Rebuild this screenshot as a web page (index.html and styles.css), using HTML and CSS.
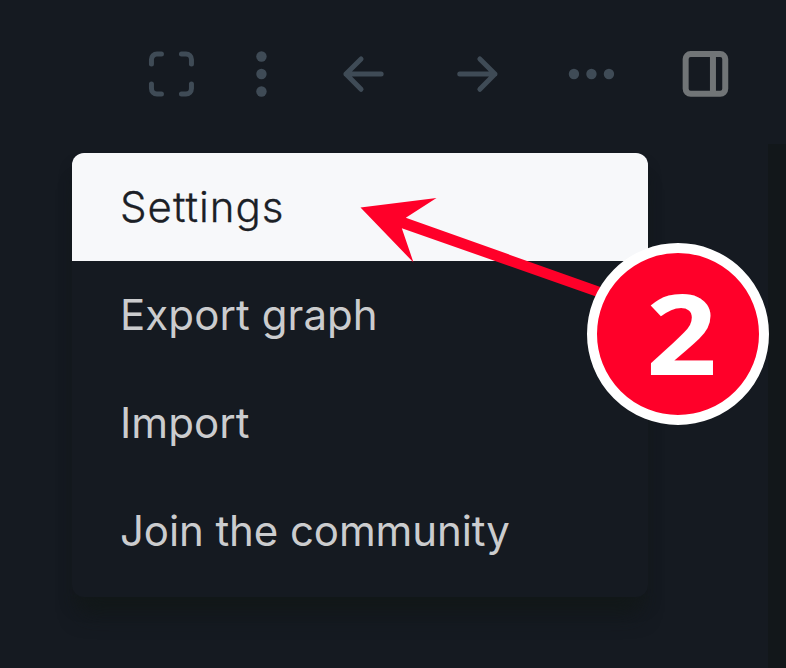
FILE: index.html
```html
<!DOCTYPE html>
<html lang="en">
<head>
<meta charset="utf-8">
<title>Menu</title>
<link rel="stylesheet" href="styles.css">
</head>
<body>
<div class="app">
  <header class="toolbar">
    <svg class="icon icon-full" viewBox="0 0 48 48"><path d="M14 4H9.500a5.500 5.500 0 0 0-5.500 5.500V14M34 4h4.500a5.500 5.500 0 0 1 5.500 5.500V14M4 34v4.500A5.500 5.500 0 0 0 9.500 44H14M44 34v4.500a5.500 5.500 0 0 1-5.500 5.500H34"/></svg>
    <svg class="icon icon-more" viewBox="0 0 48 48"><g class="dots"><circle cx="24" cy="6.500" r="5.200"/><circle cx="24" cy="24" r="5.200"/><circle cx="24" cy="41.500" r="5.200"/></g></svg>
    <svg class="icon" viewBox="0 0 48 48"><path d="M41.700 24H6.500M21.600 8.900L6.500 24l15.100 15.300"/></svg>
    <svg class="icon" viewBox="0 0 48 48"><path d="M6.300 24h35.200M26.400 8.900L41.500 24 26.400 39.300"/></svg>
    <svg class="icon" viewBox="0 0 48 48"><g class="dots"><circle cx="6.500" cy="24" r="5.200"/><circle cx="24" cy="24" r="5.200"/><circle cx="41.500" cy="24" r="5.200"/></g></svg>
    <svg class="icon icon-panel" viewBox="0 0 48 48"><rect x="4.200" y="4.100" width="39.600" height="39.700" rx="5"/><path d="M31.500 4v40"/></svg>
  </header>
  <div class="content">
    <main class="page">
      <nav class="menu">
        <a class="item active">Settings</a>
        <a class="item">Export graph</a>
        <a class="item">Import</a>
        <a class="item community">Join the community</a>
      </nav>
    </main>
    <aside class="sidebar"></aside>
  </div>
  <svg class="pointer" viewBox="0 0 260 110"><path d="M.5 10.500L76.500 1 45.800 20.800 246 92v11L41.800 31.200 53.500 65.500z"/></svg>
  <div class="badge"><span class="digit">2</span></div>
</div>
</body>
</html>
```
FILE: styles.css
```css
* { box-sizing: border-box; }
body { margin: 0; background: #151a21; font-family: Inter, "Liberation Sans", sans-serif; }
.app { position: relative; display: flex; flex-direction: column; height: 668px; overflow: hidden; }
.toolbar { display: flex; align-items: flex-start; gap: 66px; height: 144px; padding: 50px 0 0 147px; }
.icon { flex: none; width: 48px; height: 48px; fill: none; stroke: #3f4b56; stroke-width: 5; stroke-linecap: round; stroke-linejoin: round; transform: translateX(.45px); }
.icon-full { margin-right: -24px; }
.icon-more { margin-right: -12px; }
.icon-panel { stroke: #717577; stroke-width: 6; stroke-linecap: butt; }
.dots { fill: #3f4b56; stroke: none; }
.content { display: flex; flex: 1; }
.page { flex: 1; padding: 9px 0 0 72px; }
.sidebar { width: 18px; background: #12171a; }
.menu { width: 576px; height: 444px; border-radius: 12px; overflow: hidden; background: #151a21; box-shadow: 0 26px 22px -10px rgba(18, 24, 24, .8), 0 12px 12px rgba(20, 25, 27, .6); }
.item { display: flex; align-items: center; height: 108px; padding: 0 48px 2px; font-size: 42px; letter-spacing: .08px; color: #cbccce; }
.active { background: #f7f8fa; color: #1b2026; font-weight: 300; letter-spacing: 1px; -webkit-text-stroke: .3px #1b2026; }
.community { letter-spacing: -.1px; }
.pointer { position: absolute; left: 360px; top: 197px; width: 260px; height: 110px; fill: #ff0029; }
.badge { position: absolute; left: 587px; top: 243px; display: flex; align-items: center; justify-content: center; width: 182px; height: 182px; border: 10px solid #fff; border-radius: 50%; background: #ff0029; }
.digit { font: 700 114px/1 "Open Sans", sans-serif; color: #fff; transform: translate(4px, -2px) scale(1.09, .975); }
```
